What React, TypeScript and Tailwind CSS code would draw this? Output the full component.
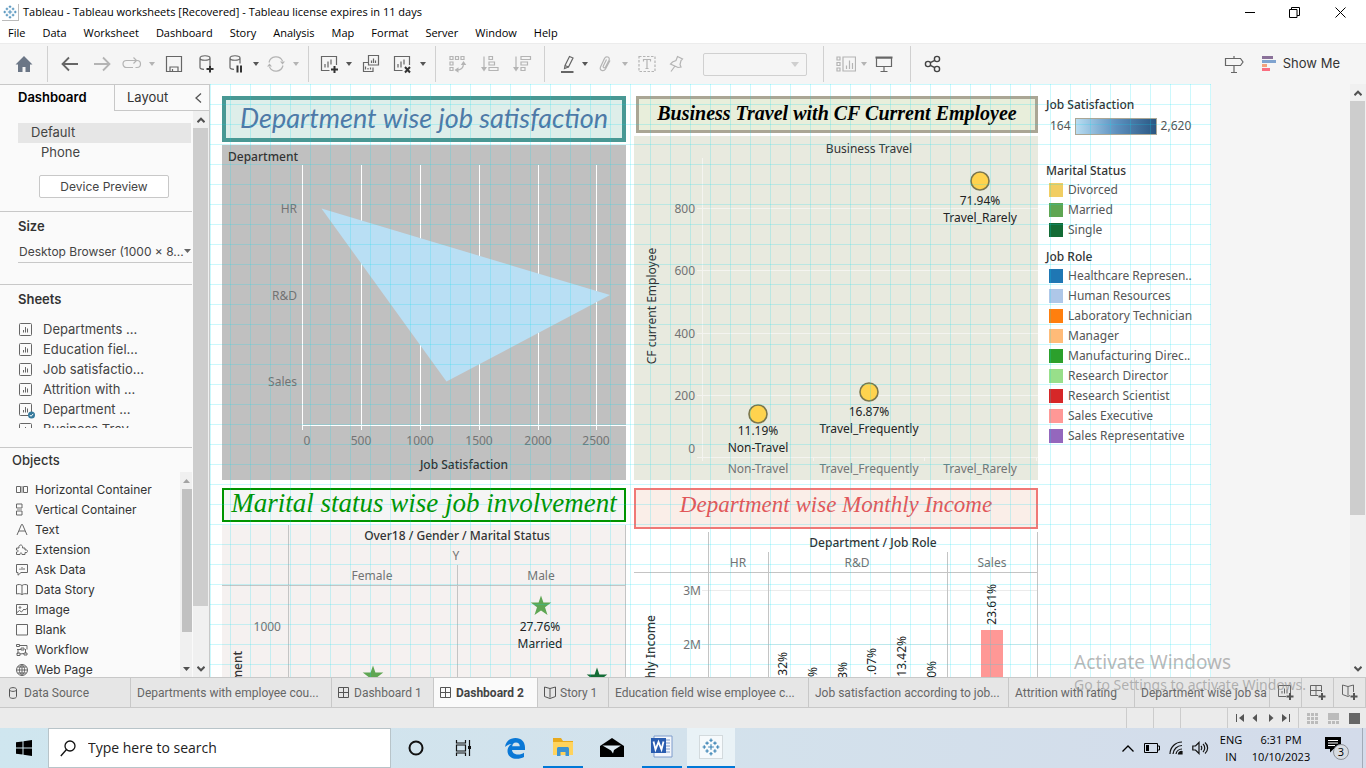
import React from "react";

const UI = "font-['Noto_Sans',sans-serif]";

function Caret({ dim }: { dim?: boolean }) {
  return (
    <span className="flex w-3 shrink-0 justify-center">
      <svg width="6" height="4" viewBox="0 0 6 4" aria-hidden="true">
        <path d="M0 0h6L3 4z" fill={dim ? "#b4b4b4" : "#555"} />
      </svg>
    </span>
  );
}

function Tool({ label, w, dim, children }: { label: string; w: string; dim?: boolean; children: React.ReactNode }) {
  return (
    <button aria-label={label} className={`flex h-8 shrink-0 items-center justify-center ${w}`}>
      <svg width="20" height="20" viewBox="0 0 20 20" fill="none" stroke={dim ? "#b4b4b4" : "#666"} strokeWidth="1.2" aria-hidden="true">
        {children}
      </svg>
    </button>
  );
}

function Sep({ m }: { m: string }) {
  return <span className={`h-9 w-px shrink-0 bg-[#d0d0d0] ${m}`} />;
}

function TableauMark({ size }: { size: number }) {
  return (
    <svg width={size} height={size} viewBox="0 0 16 16" stroke="#3a83b4" strokeWidth="1" aria-hidden="true">
      <path d="M8 5.5v5M5.5 8h5M8 .5v3M6.5 2h3M8 12.5v3M6.5 14h3M2 6.5v3M.5 8h3M14 6.5v3M12.5 8h3M4.5 3v3M3 4.5h3M11.5 3v3M10 4.5h3M4.5 10v3M3 11.5h3M11.5 10v3M10 11.5h3" />
    </svg>
  );
}

function TitleBar() {
  return (
    <header className={`flex h-6 shrink-0 items-center pl-[2px] text-[11px] text-black ${UI}`}>
      <span className="border-r border-b border-[#bbb] p-px"><TableauMark size={14} /></span>
      <h1 className="ml-1 font-['Open_Sans',sans-serif] whitespace-nowrap">Tableau - Tableau worksheets [Recovered] - Tableau license expires in 11 days</h1>
      <div className="ml-auto flex pr-[3px]">
        <button aria-label="Minimize" className="flex h-5 w-[45px] items-center justify-center">
          <svg width="10" height="10" stroke="#000"><path d="M0 5.500h10" /></svg>
        </button>
        <button aria-label="Restore" className="flex h-5 w-[45px] items-center justify-center">
          <svg width="11" height="11" fill="none" stroke="#000"><path d="M.5 2.500h7.500v8h-7.500zM2.500 2.500v-2h8v8h-2.500" /></svg>
        </button>
        <button aria-label="Close" className="flex h-5 w-[46px] items-center justify-center">
          <svg width="11" height="11" stroke="#000"><path d="M.5 .5l10 10M10.500 .5l-10 10" /></svg>
        </button>
      </div>
    </header>
  );
}

const menus = ["File", "Data", "Worksheet", "Dashboard", "Story", "Analysis", "Map", "Format", "Server", "Window", "Help"];

function MenuBar() {
  return (
    <nav className="flex h-[19px] shrink-0 items-center gap-[17px] pl-2 font-['Open_Sans',sans-serif] text-[11px] text-black">
      {menus.map((m) => <button key={m}>{m}</button>)}
    </nav>
  );
}

function Toolbar() {
  return (
    <div className="flex h-[41px] shrink-0 items-center border-t border-[#ececec] bg-[#f5f5f5] pl-2">
      <Tool label="Home" w="w-8"><path d="M1.500 10.500L10 2l8.500 8.500h-2.500v7.500h-4.500v-5h-3v5H4v-7.500z" fill="#6b7686" stroke="none" /></Tool>
      <Sep m="ml-[7px] mr-1.5" />
      <Tool label="Undo" w="w-8"><path d="M18 10H3M9 3.500L2.500 10 9 16.500" strokeWidth="1.800" /></Tool>
      <Tool label="Redo" w="w-8" dim><path d="M2 10h15M11 3.500l6.500 6.500-6.500 6.500" strokeWidth="1.800" /></Tool>
      <Tool label="Replay" w="w-7" dim><path d="M11 13.500H4.500a3.500 3.500 0 0 1 0-7H14M11.500 3.500l3 3-3 3M15 6.500a3.500 3.500 0 0 1 0 7h-1.500" /></Tool>
      <Caret dim />
      <Tool label="Save" w="w-8"><path d="M2.500 2.500h15v15h-15zM6 17.500v-4.500h8v4.500M8.500 15v2.500" /></Tool>
      <Tool label="New data source" w="w-8"><path d="M4 4v9.500c0 1 2 1.700 4 1.900M14 4v7M4 4c0-3 10-3 10 0s-10 3-10 0" /><path d="M14 11.500v7M10.500 15h7" stroke="#333" strokeWidth="2" /></Tool>
      <Tool label="Pause updates" w="w-7"><path d="M4 4v9.500c0 1 2 1.700 4 1.900M14 4v5.500M4 4c0-3 10-3 10 0s-10 3-10 0" /><path d="M11.500 11.500v7M15 11.500v7" stroke="#333" strokeWidth="2" /></Tool>
      <Caret />
      <Tool label="Refresh" w="w-7" dim><path d="M3 8.500a7.200 7.200 0 0 1 13.500-1.500M17 11.500a7.200 7.200 0 0 1-13.500 1.500" /><path d="M14 7.500h5l-2.500 3zM1 12.500h5L3.500 9.500z" fill="#b4b4b4" stroke="none" /></Tool>
      <Caret dim />
      <Sep m="mx-1.5" />
      <Tool label="New worksheet" w="w-7"><path d="M10.500 16.500h-8v-14h15v8.500M6 13.500V10M9 13.500V7.500M12 10.500v-5" /><path d="M15.500 12v7M12 15.500h7" stroke="#333" strokeWidth="2" /></Tool>
      <Caret />
      <Tool label="Duplicate" w="w-8"><path d="M7.500 1.500h10v9.500h-10zM10.500 9V6.500M12.500 9V4.500M14.500 9V6.500M7 8.500H2.500v9h9.500V13.500M4.500 15.500v-3M7 15.500v-1.500M9.500 15.500v-2" /></Tool>
      <Tool label="Clear sheet" w="w-[30px]"><path d="M10.500 16.500h-8v-14h15v8.500M6 13.500V10M9 13.500V7.500M12 10.500v-5" /><path d="M13 13l5 5.500M18 13l-5 5.500" stroke="#333" strokeWidth="2" /></Tool>
      <Caret />
      <Sep m="mx-1.5" />
      <Tool label="Swap rows and columns" w="w-8" dim><path d="M2 2.500h3v3H2zM7.500 2.500h3v3h-3zM13 2.500h3v3h-3zM2 8h3v3H2zM2 13.500h3v3H2z M8.500 16c4.500 0 7-2.500 7-6.500" /><path d="M12.800 11h5.500L15.500 7zM10.500 13.200v5.500L6.500 16z" fill="#b4b4b4" stroke="none" /></Tool>
      <Tool label="Sort ascending" w="w-8" dim><path d="M4 2.500v12M9 2.500h3.500v3H9zM9 8h5.500v3H9zM9 13.500h9v3H9z" /><path d="M1 13h6l-3 4.500z" fill="#b4b4b4" stroke="none" /></Tool>
      <Tool label="Sort descending" w="w-8" dim><path d="M4 2.500v12M9 2.500h9.500v3H9zM9 8h6.500v3H9zM9 13.500h4v3H9z" /><path d="M1 13h6l-3 4.500z" fill="#b4b4b4" stroke="none" /></Tool>
      <Sep m="ml-1.5 mr-3.5" />
      <Tool label="Highlight" w="w-5"><path d="M6 11.500L10.500 2.500 14 4 9.500 13zL5.500 14.500 9.500 13" /><path d="M2 18h12.500" strokeWidth="2" /></Tool>
      <Caret />
      <Tool label="Group members" w="w-7" dim><path d="M15 6.500L10.500 15c-1.800 3-6.500 1.500-5-2l4-8.500c1.500-3 6-1.500 4.500 1.800L10.500 13c-.8 1.500-3 .8-2.200-1L11.500 5.500M5.500 13L9 5.500" /></Tool>
      <Caret dim />
      <Tool label="Show mark labels" w="w-8" dim><path d="M2 2.500h16v15H2z" strokeDasharray="2.500 1.500" /><path d="M6.500 7.500v-2h7v2M10 5.500v9M8.500 14.500h3" /></Tool>
      <Tool label="Fix axes" w="w-7" dim><path d="M10.500 2.500l5 2.500-1.500 1.500-1 4 1 2.500-3 .5-7.500-3.500 2-2 3.500-1.500zM8 12l-4 5.500" /></Tool>
      <select aria-label="Fit" disabled className="ml-3 h-[23px] w-26 appearance-none rounded-xs border border-[#d0d0d0] bg-[#f5f5f5]" />
      <span className="-ml-4 flex w-4"><svg width="8" height="5" viewBox="0 0 8 5"><path d="M0 0h8L4 5z" fill="#cfcfcf" /></svg></span>
      <Sep m="ml-4 mr-2.5" />
      <Tool label="Show cards" w="w-6" dim><path d="M1 3h3v3H1zM1 8.500h3v3H1zM1 14h3v3H1zM7 3h12.500v14H7zM10.500 15v-3.500M13.500 15V6.500M16.500 15V9" /></Tool>
      <Caret dim />
      <Tool label="Presentation mode" w="w-7"><path d="M2.500 4h15v8.500h-15zM10 12.500V17M6.500 17.500h7" /><path d="M1.500 3.500h17" strokeWidth="2" /></Tool>
      <Sep m="ml-3 mr-1.5" />
      <Tool label="Share" w="w-8"><g stroke="#444" strokeWidth="1.400"><circle cx="5" cy="10" r="2.600" /><circle cx="14" cy="5" r="2.600" /><circle cx="14" cy="15" r="2.600" /><path d="M7.300 8.700l4.500-2.400M7.300 11.300l4.500 2.400" /></g></Tool>
      <div className="ml-auto flex items-center gap-3 pr-[26px]">
        <Tool label="Guide" w="w-8"><path d="M1.500 4.500h15l2.500 3.500-2.500 3.500h-15zM10 2v2.500M10 11.500v7M7 18.500h6" /></Tool>
        <button className="flex items-center gap-1.5 font-['Inter',sans-serif] text-[13px] text-[#333]">
          <svg width="15" height="16" aria-hidden="true">
            <path d="M0 0h11v3H0z" fill="#8a7199" /><path d="M0 4h14v3H0z" fill="#7fa3cf" /><path d="M0 8h5v3H0z" fill="#f2a27c" /><path d="M0 12h8v3H0z" fill="#fa6e80" />
          </svg>
          Show Me
        </button>
      </div>
    </div>
  );
}

function Chevron({ dir }: { dir: "up" | "down" }) {
  return (
    <button aria-label={`Scroll ${dir}`} className="flex h-[17px] w-full shrink-0 items-center justify-center">
      <svg width="8" height="6" fill="none" stroke="#505050" strokeWidth="2"><path d={dir === "up" ? "M.5 5.200L4 1.700l3.500 3.500" : "M.5 .8L4 4.300 7.500.8"} /></svg>
    </button>
  );
}

function SheetIcon({ used }: { used?: boolean }) {
  return (
    <svg width="17" height="17" viewBox="0 0 17 17" fill="none" stroke="#666" className="shrink-0" aria-hidden="true">
      <rect x=".5" y="1.500" width="12" height="12" rx="1" />
      <path d="M4.500 10.500V8M6.500 10.500V5M8.500 10.500V6.500" />
      {used && <><circle cx="12.500" cy="13" r="3.500" fill="#35799c" stroke="none" /><path d="M10.800 13l1.200 1.300 2.200-2.400" stroke="#fff" /></>}
    </svg>
  );
}

const objectIcons: [string, React.ReactNode][] = [
  ["Horizontal Container", <><path d="M.5 3.500h4v6h-4zM7.500 3.500h4v6h-4z" /><path d="M5 3h2v7H5z" fill="#bbb" stroke="none" /></>],
  ["Vertical Container", <><path d="M.5 1h5.500v4H.5zM.5 8h5.500v4H.5z" /><path d="M1 5.500h5v2H1z" fill="#bbb" stroke="none" /></>],
  ["Text", <path d="M1 12L5.500 1.500h1L11 12M3 8h6" />],
  ["Extension", <path d="M.5 5H3c-1-4 4.500-4 3.500 0h2.500v2c3.500-1 3.500 3.500 0 2.500v2H6c.5-2-2.500-2-2 0H.5V9c2 .5 2-2.500 0-2z" />],
  ["Ask Data", <><path d="M.5 1.500h11v8H5L2 12.200V9.500H.5z" /><path d="M4 7V5.500M6 7V4M8 7V5" /></>],
  ["Data Story", <path d="M6 2.500v9M6 2.500C4 1 2.500 1.500.5 2v9c2-.5 3.500-.5 5.500.5 2-1 3.500-1 5.500-.5V2c-2-.5-3.500-1-5.500.5" />],
  ["Image", <><path d="M.5 1.500h11v10H.5zM1 9.500l2.500-2 2 1.500L8 6l1 1 2.500-2" /><circle cx="4" cy="4.500" r=".8" /></>],
  ["Blank", <path d="M.5 1.500h11v10.500H.5z" />],
  ["Workflow", <path d="M.5 1.500h3v2h-3zM3.500 2.500H11v4M5 5h3v2H5zM1 6.500h4M2 6.500v4H1M1 10h3v2.500H1zM8 10h3v2H8zM4 11l4-.5M9.500 10V6" />],
  ["Web Page", <><circle cx="6" cy="7" r="5.500" /><path d="M.5 7h11M6 1.500v11M1.500 4h9M1.500 10h9M6 1.500c-3.500 3-3.500 8 0 11 3.500-3 3.500-8 0-11" /></>],
];

function Sidebar() {
  const sheets = ["Departments ...", "Education fiel...", "Job satisfactio...", "Attrition with ...", "Department ...", "Business Trav..."];
  return (
    <aside className="flex w-[210px] shrink-0 flex-col border-t border-r border-[#c8c8c8] bg-[#fafafa] font-['Inter',sans-serif] text-xs text-[#444]">
      <div className="flex h-[26px] shrink-0">
        <button className="w-[114px] pl-[18px] text-left text-[13px] font-semibold text-black">Dashboard</button>
        <div className="flex flex-1 items-center justify-between border-b border-l border-[#c8c8c8] pr-[7px] pl-3">
          <button className="text-[13px] text-[#333]">Layout</button>
          <button aria-label="Collapse pane"><svg width="7" height="10" fill="none" stroke="#555" strokeWidth="1.300"><path d="M6 .5L1 5l5 4.500" /></svg></button>
        </div>
      </div>
      <div className="flex min-h-0 flex-1">
        <div className="flex min-w-0 flex-1 flex-col overflow-hidden">
          <div className="shrink-0 border-b border-[#c8c8c8] pt-3 pr-px pb-[13px] pl-[18px]">
            <button className="block h-5 w-full bg-[#e6e6e6] pl-[13px] text-left text-[13px]">Default</button>
            <button className="block h-5 pl-[23px] text-[13px]">Phone</button>
            <button className="mt-3 ml-[21px] block h-[23px] w-[130px] rounded-xs border border-[#c8c8c8] bg-white">Device Preview</button>
          </div>
          <section className="h-[73px] shrink-0 border-b border-[#c8c8c8] pt-[3px] pl-[18px]">
            <h2 className="text-[13px] leading-[22px] font-semibold text-[#333]">Size</h2>
            <button className="mt-1 flex h-[22px] w-full items-center justify-between border-b border-[#c8c8c8] pr-px pl-px whitespace-nowrap">
              Desktop Browser (1000 x 8...
              <svg width="7" height="5" className="shrink-0"><path d="M0 0h7L3.500 4z" fill="#666" /></svg>
            </button>
          </section>
          <section className="h-[163px] shrink-0 border-b border-[#c8c8c8] pt-[3px] pl-[18px]">
            <h2 className="text-[13px] leading-[22px] font-semibold text-[#333]">Sheets</h2>
            <ul className="mt-2.5 h-[108px] overflow-hidden">
              {sheets.map((s, i) => (
                <li key={s} className="flex h-5 items-center gap-[7px] pl-px text-[13px]"><SheetIcon used={i === 4} />{s}</li>
              ))}
            </ul>
          </section>
          <section className="flex min-h-0 flex-1 flex-col">
            <h2 className="pl-3 text-[13px] leading-[24px] font-medium text-[#333]">Objects</h2>
            <div className="flex min-h-0 flex-1">
              <ul className="min-w-0 flex-1 overflow-hidden pt-2">
                {objectIcons.map(([name, icon]) => (
                  <li key={name} className="flex h-5 items-center gap-[7px] pl-4 whitespace-nowrap text-[#333]">
                    <svg width="12" height="14" viewBox="0 0 12 14" fill="none" stroke="#666" aria-hidden="true">{icon}</svg>
                    {name}
                  </li>
                ))}
              </ul>
              <div className="flex w-3 shrink-0 flex-col items-center bg-[#f0f0f0]">
                <svg width="8" height="17"><path d="M1 11h7L4.500 7z" fill="#a3a3a3" /></svg>
                <span className="h-[143px] w-2.5 self-end bg-[#c1c1c1]" />
                <svg width="8" height="17" className="mt-auto"><path d="M1 7h7L4.500 11z" fill="#505050" /></svg>
              </div>
            </div>
          </section>
        </div>
        <div className="ml-px flex w-4 shrink-0 flex-col bg-[#f0f0f0] pr-px">
          <Chevron dir="up" />
          <span className="h-[478px] shrink bg-[#cdcdcd]" />
          <div className="mt-auto"><Chevron dir="down" /></div>
        </div>
      </div>
    </aside>
  );
}

const dark = "#333";
const light = "#737373";

function SatisfactionChart() {
  return (
    <svg width="404" height="335" viewBox="222 145 404 335" className={`mt-[3px] shrink-0 bg-[#c0c0c0] text-xs ${UI}`}>
      <path d="M302.500 165v265M361.500 165v265M420.500 165v265M479.500 165v265M538.500 165v265M596.500 165v265M302 425.500h324" stroke="#fff" />
      <path d="M321.500 208.500L610 295 446.500 381.500z" fill="#b9dff4" />
      <g fill={dark} className="font-medium">
        <text x="228" y="161">Department</text>
        <text x="464" y="469" textAnchor="middle">Job Satisfaction</text>
      </g>
      <g fill={light} textAnchor="end">
        <text x="297" y="213">HR</text><text x="297" y="300">R&amp;D</text><text x="297" y="386">Sales</text>
      </g>
      <g fill={light} textAnchor="middle">
        <text x="307" y="445">0</text><text x="361" y="445">500</text><text x="420" y="445">1000</text>
        <text x="479" y="445">1500</text><text x="538" y="445">2000</text><text x="596" y="445">2500</text>
      </g>
    </svg>
  );
}

function TravelChart() {
  const marks = [
    { x: 980, y: 181, pct: "71.94%", name: "Travel_Rarely", ty: 205 },
    { x: 869, y: 392, pct: "16.87%", name: "Travel_Frequently", ty: 416 },
    { x: 758, y: 414, pct: "11.19%", name: "Non-Travel", ty: 435 },
  ];
  return (
    <svg width="404" height="344" viewBox="634 136 404 344" className={`mt-[3px] shrink-0 bg-[#e8eadf] text-xs ${UI}`}>
      <path d="M702.500 158v303M697 208.500h341M697 270.500h341M697 333.500h341M697 395.500h341M697 457.500h341M813.500 457v4M924.500 457v4M1036.500 457v4" stroke="#f4f4f0" />
      <text x="869" y="153" textAnchor="middle" fill={dark}>Business Travel</text>
      <text transform="translate(656 306) rotate(-90)" textAnchor="middle" fill={dark}>CF current Employee</text>
      <g fill={light} textAnchor="end">
        <text x="695" y="213">800</text><text x="695" y="275">600</text><text x="695" y="338">400</text><text x="695" y="400">200</text><text x="695" y="453">0</text>
      </g>
      {marks.map((m) => (
        <g key={m.name} textAnchor="middle">
          <circle cx={m.x} cy={m.y} r="9" fill="#ffd34e" stroke="#7b764c" strokeWidth="1.600" />
          <text x={m.x} y={m.ty} fill="#222">{m.pct}</text>
          <text x={m.x} y={m.ty + 17} fill="#222">{m.name}</text>
          <text x={m.x} y="473" fill={light}>{m.name}</text>
        </g>
      ))}
    </svg>
  );
}

function Star({ x, y, fill }: { x: number; y: number; fill: string }) {
  return <path transform={`translate(${x} ${y})`} fill={fill} d="M0-10.500L2.400-3.400 10.300-3.400 4 1.300 6.500 9 0 4.400-6.500 9-4 1.300-10.300-3.400-2.400-3.400z" />;
}

function InvolvementChart() {
  return (
    <svg width="404" height="355" viewBox="222 525 404 355" className={`mt-[3px] shrink-0 bg-[#f5f1f0] text-xs ${UI}`}>
      <path d="M288.500 525v355M457.500 565v315M625.500 525v355M222 585.500h404" stroke="#c4c4c4" />
      <g textAnchor="middle" fill={light}>
        <text x="457" y="540" fill={dark} className="font-medium">Over18 / Gender / Marital Status</text>
        <text x="456" y="560">Y</text><text x="372" y="580">Female</text><text x="541" y="580">Male</text>
        <text x="540" y="631" fill="#222">27.76%</text><text x="540" y="648" fill="#222">Married</text>
      </g>
      <text x="281" y="631" textAnchor="end" fill={light}>1000</text>
      <text transform="translate(242 651) rotate(-90)" textAnchor="end" fill={dark} className="font-medium">Job Involvement</text>
      <Star x={541} y={606} fill="#5fa653" />
      <Star x={373} y={676} fill="#5fa653" />
      <Star x={597} y={678} fill="#136b35" />
    </svg>
  );
}

function IncomeChart() {
  const labels: [number, number, string][] = [[787, 652, "32%"], [817, 667, "%"], [847, 662, "3%"], [876, 648, ".07%"], [906, 636, "13.42%"], [936, 661, "0%"], [996, 584, "23.61%"]];
  return (
    <svg width="404" height="348" viewBox="634 532 404 348" className={`mt-[3px] shrink-0 text-xs ${UI}`}>
      <path d="M702 590.500h335M702 644.500h335" stroke="#ebebeb" />
      <path d="M708.500 532v348M768.500 552v328M947.500 552v328M1037.500 532v348M634 572.500h404" stroke="#c4c4c4" />
      <path d="M981 630h22v250h-22z" fill="#ff9896" />
      <g textAnchor="middle" fill={light}>
        <text x="873" y="547" fill={dark} className="font-medium">Department / Job Role</text>
        <text x="738" y="567">HR</text><text x="857" y="567">R&amp;D</text><text x="992" y="567">Sales</text>
      </g>
      <g textAnchor="end" fill={light}>
        <text x="701" y="595">3M</text><text x="701" y="649">2M</text>
        <text transform="translate(655 615) rotate(-90)" fill={dark} className="font-medium">Monthly Income</text>
      </g>
      {labels.map(([x, y, t]) => (
        <text key={x} transform={`translate(${x} ${y}) rotate(-90)`} textAnchor="end" fill="#222">{t}</text>
      ))}
    </svg>
  );
}

function LegendRow({ swatch, name }: { swatch: string; name: string }) {
  return <li className="flex h-5 items-center gap-[5px] pl-[3px]"><span className={`size-3.5 ${swatch}`} />{name}</li>;
}

function Legends() {
  return (
    <div className={`w-[156px] shrink-0 text-xs whitespace-nowrap text-[#555] ${UI}`}>
      <h3 className="h-[18px] leading-[18px] font-medium text-[#333]">Job Satisfaction</h3>
      <div className="flex h-6 items-center gap-1 pl-1">
        164<span className="h-[17px] w-[82px] border border-[#aaa695] bg-linear-to-r from-[#b9ddf1] via-[#5e91bf] to-[#2a5783]" />2,620
      </div>
      <h3 className="mt-6 h-[18px] leading-[18px] font-medium text-[#333]">Marital Status</h3>
      <ul>
        <LegendRow swatch="bg-[#f1ce63]" name="Divorced" />
        <LegendRow swatch="bg-[#5fa653]" name="Married" />
        <LegendRow swatch="bg-[#136b35]" name="Single" />
      </ul>
      <h3 className="mt-2 h-[18px] leading-[18px] font-medium text-[#333]">Job Role</h3>
      <ul>
        <LegendRow swatch="bg-[#1f77b4]" name="Healthcare Represen.." />
        <LegendRow swatch="bg-[#aec7e8]" name="Human Resources" />
        <LegendRow swatch="bg-[#ff7f0e]" name="Laboratory Technician" />
        <LegendRow swatch="bg-[#ffbb78]" name="Manager" />
        <LegendRow swatch="bg-[#2ca02c]" name="Manufacturing Direc.." />
        <LegendRow swatch="bg-[#98df8a]" name="Research Director" />
        <LegendRow swatch="bg-[#d62728]" name="Research Scientist" />
        <LegendRow swatch="bg-[#ff9896]" name="Sales Executive" />
        <LegendRow swatch="bg-[#9467bd]" name="Sales Representative" />
      </ul>
    </div>
  );
}

function Canvas() {
  return (
    <main className="flex min-w-0 flex-1 bg-[#f5f5f5]">
      <div className="flex min-w-0 flex-1 overflow-hidden">
        <div className="relative flex w-[1001px] shrink-0 gap-2 overflow-hidden bg-white pt-3 pl-3">
          <div className="flex w-[404px] shrink-0 flex-col">
            <h2 className="flex h-[46px] shrink-0 items-center justify-center border-4 border-[#499894] bg-[#deeeea] pb-1 font-['Lato',sans-serif] text-[27px] leading-none whitespace-nowrap text-[#4e79a7] italic">Department wise job satisfaction</h2>
            <SatisfactionChart />
            <h2 className="mt-2 flex h-[34px] shrink-0 items-center justify-center border-2 border-[#009400] bg-[#f5f5f5] pb-1 font-['Liberation_Serif',serif] text-[27px] leading-none whitespace-nowrap text-[#009400] italic">Marital status wise job involvement</h2>
            <InvolvementChart />
          </div>
          <div className="flex w-[404px] shrink-0 flex-col">
            <h2 className="ml-0.5 flex h-[37px] shrink-0 items-center justify-center border-3 border-[#aaa695] bg-[#e8eedb] pb-1 font-['Liberation_Serif',serif] text-[20px] leading-none font-bold whitespace-nowrap text-black italic">Business Travel with CF Current Employee</h2>
            <TravelChart />
            <h2 className="mt-2 flex h-[41px] shrink-0 items-center justify-center border-2 border-[#f07876] bg-[#faeee8] pb-2 font-['Liberation_Serif',serif] text-[23px] leading-none whitespace-nowrap text-[#e15759] italic">Department wise Monthly Income</h2>
            <IncomeChart />
          </div>
          <Legends />
          <div className="pointer-events-none absolute inset-0 bg-[linear-gradient(to_right,rgba(0,220,240,0.2)_1px,transparent_1px),linear-gradient(to_bottom,rgba(0,220,240,0.2)_1px,transparent_1px)] bg-size-[20px_20px]" />
        </div>
      </div>
      <div className="flex w-4 shrink-0 flex-col bg-[#f0f0f0] pr-px">
        <Chevron dir="up" />
        <span className="h-[414px] bg-[#cdcdcd]" />
        <div className="mt-auto"><Chevron dir="down" /></div>
      </div>
    </main>
  );
}

function GridIcon() {
  return <svg width="12" height="12" fill="none" stroke="#555" className="shrink-0"><path d="M.5 .5h10v10H.5zM5.500 .5v10M.5 5.500h10" /></svg>;
}
function BookIcon() {
  return <svg width="12" height="13" viewBox="0 0 12 13" fill="none" stroke="#555" className="shrink-0"><path d="M6 2.500v9M6 2.500L.5 1v9.500l5.500 2 5.500-2V1z" /></svg>;
}

const tabs: { w: string; name: string; icon?: React.ReactNode; on?: boolean }[] = [
  { w: "w-[131px] pl-2", name: "Data Source", icon: <svg width="10" height="12" fill="none" stroke="#555" className="mr-0.5 shrink-0"><path d="M1.500 2.500v7c0 2.500 7 2.500 7 0v-7c0-2.500-7-2.500-7 0s7 2.500 7 0" /></svg> },
  { w: "w-[201px] pl-1.5", name: "Departments with employee cou..." },
  { w: "w-[102px] pl-1.5", name: "Dashboard 1", icon: <GridIcon /> },
  { w: "w-[104px] pl-1.5", name: "Dashboard 2", icon: <GridIcon />, on: true },
  { w: "w-[71px] pl-1.5", name: "Story 1", icon: <BookIcon /> },
  { w: "w-[200px] pl-1.5", name: "Education field wise employee c..." },
  { w: "w-[200px] pl-1.5", name: "Job satisfaction according to job..." },
  { w: "w-[126px] pl-1.5", name: "Attrition with rating" },
];

function SheetTabs() {
  return (
    <div className="flex h-[31px] shrink-0 border-t border-b border-[#c8c8c8] bg-[#e6e6e6] font-['Roboto',sans-serif] text-xs text-[#666]">
      {tabs.map((t) => (
        <button key={t.name} className={`flex shrink-0 items-center gap-1 overflow-hidden border-r border-[#c8c8c8] whitespace-nowrap ${t.w} ${t.on ? "bg-[#fafafa] font-bold text-[#444]" : ""}`}>{t.icon}{t.name}</button>
      ))}
      <button className="flex min-w-0 flex-1 items-center overflow-hidden border-r border-[#c8c8c8] pl-1.5 whitespace-nowrap">Department wise job sa</button>
      {[
        ["New worksheet", "M9 12.500H1.500v-11h12V9M5 9.500V7M7.500 9.500V4.500M10 9.500V5.500"],
        ["New dashboard", "M9 11.500H1.500v-10h11V8M7 1.500v10M1.500 6.500h11"],
        ["New story", "M7 2.500v9M9 11.500l-2 1-5.500-2V1L7 2.500 12.500 1V8"],
      ].map(([label, d]) => (
        <button key={label} aria-label={label} className="flex w-8 shrink-0 items-center justify-center border-r border-[#c8c8c8]">
          <svg width="17" height="17" fill="none" stroke="#666"><path d={d} /><path d="M13 9v7M9.500 12.500h7" strokeWidth="2" stroke="#555" /></svg>
        </button>
      ))}
    </div>
  );
}

function StatusBar() {
  return (
    <div className="flex h-5 shrink-0 bg-[#ebebeb]">
      <span className="ml-auto w-[27px] border-l border-[#ccc]" />
      <span className="w-[27px] border-l border-[#ccc]" />
      <span className="w-[47px] border-l border-[#ccc]" />
      <div className="flex w-[71px] items-center justify-around border-l border-[#ccc] px-1">
        {[["First", "M1 0v8H0V0zM8 0v8L3 4z"], ["Previous", "M6 0v8L1.500 4z"], ["Next", "M2 0v8L6.500 4z"], ["Last", "M7 0v8h1V0zM0 0v8L5 4z"]].map(([l, d]) => (
          <button key={l} aria-label={l}><svg width="8" height="8" fill="#555"><path d={d} /></svg></button>
        ))}
      </div>
      <div className="flex w-[68px] items-center gap-2.5 border-l border-[#ccc] pl-2">
        <button aria-label="Show sheet sorter"><svg width="11" height="11" fill="#bbb"><path d="M0 0h3v3H0zM4 0h3v3H4zM8 0h3v3H8zM0 4h3v3H0zM4 4h3v3H4zM8 4h3v3H8zM0 8h3v3H0zM4 8h3v3H4zM8 8h3v3H8z" /></svg></button>
        <button aria-label="Show filmstrip"><svg width="11" height="11" fill="#bbb"><path d="M0 0h11v7H0zM0 8h3v3H0zM4 8h3v3H4zM8 8h3v3H8z" /></svg></button>
        <button aria-label="Show tabs"><svg width="11" height="11"><path d="M0 0h11v11H0z" fill="#666" /></svg></button>
      </div>
    </div>
  );
}

function TaskButton({ label, cls, children }: { label: string; cls: string; children: React.ReactNode }) {
  return <button aria-label={label} className={`flex h-10 shrink-0 items-center justify-center ${cls}`}>{children}</button>;
}

function Taskbar() {
  return (
    <footer className="flex h-10 shrink-0 items-center bg-linear-to-r from-[#cfe6ef] via-[#d3e2ec] to-[#d3dbea] font-['Open_Sans',sans-serif] text-black">
      <TaskButton label="Start" cls="w-12"><svg width="16" height="16"><path d="M0 2.300L6.500 1.400V7.500H0zM7.500 1.200L16 0v7.500H7.500zM0 8.500h6.500v6.100L0 13.700zM7.500 8.500H16V16L7.500 14.800z" /></svg></TaskButton>
      <label className="flex h-10 w-[343px] shrink-0 items-center gap-3 border border-[#b8c4c9] bg-white pl-[11px]">
        <svg width="16" height="17" fill="none" stroke="#111" strokeWidth="1.300"><circle cx="10" cy="6" r="5" /><path d="M6.500 9.500L.8 16" /></svg>
        <input aria-label="Search" placeholder="Type here to search" className="w-60 bg-transparent text-sm text-[#222] outline-none placeholder:text-[#222]" />
      </label>
      <TaskButton label="Cortana" cls="w-[50px]"><svg width="16" height="16" fill="none" stroke="#111" strokeWidth="2"><circle cx="8" cy="8" r="6.500" /></svg></TaskButton>
      <TaskButton label="Task View" cls="w-[46px]"><svg width="18" height="16" fill="none" stroke="#111" strokeWidth="1.200"><path d="M1.500 0v3h9V0M1.500 5h9v6h-9zM1.500 16v-3h9v3M14.500 0v16" /><path d="M13 6h3v3h-3z" fill="#111" stroke="none" /></svg></TaskButton>
      <TaskButton label="Edge" cls="w-[56px]">
        <svg width="22" height="22" viewBox="0 0 22 22"><path d="M1 10C2 3.500 6.500 1 11.500 1 17.500 1 21 5 21 10.500V13H8c.3 3 3 4.500 6 4.500 2.500 0 4.500-.8 6-1.800V20c-2 1.200-4.500 1.800-7.500 1.800C6.500 21.800 3.500 18 3.500 14c0-3 1.500-5.500 4.200-7C4.500 7 2.500 8.500 1 10zM8.200 9.300h7.600C15.800 6.800 14.300 5.500 12 5.500S8.500 7 8.200 9.300z" fill="#0a78d6" /></svg>
      </TaskButton>
      <TaskButton label="File Explorer" cls="w-10 border-b-2 border-[#0078d7]">
        <svg width="22" height="20"><path d="M1 1h8l2 3h10v13H1z" fill="#e8a91c" /><path d="M1 5h20v13H1z" fill="#ffd35c" /><path d="M5 19v-7c0-1.500.5-2 2-2h8c1.500 0 2 .5 2 2v7h-3.500v-4h-5v4z" fill="#3c93d2" /></svg>
      </TaskButton>
      <TaskButton label="Mail" cls="ml-1.5 w-[46px]"><svg width="24" height="20"><path d="M0 8L12 0l12 8v11H0z" /><path d="M2.500 7.500h18.500L14 12l-1 3.500-2-3z" fill="#dceaf2" /></svg></TaskButton>
      <TaskButton label="Word" cls="ml-[7px] w-10 border-b-2 border-[#0078d7]">
        <svg width="24" height="24"><path d="M4 1h18v21H4z" fill="#f3f6fb" stroke="#7f9ccc" /><path d="M14 5h6M14 8h6M14 11h6M14 14h6M14 17h6" stroke="#7f9ccc" /><path d="M1 3h15v15H1z" fill="#2a5db0" /><path d="M3.500 6.500l2 8 3-7.500 3 7.500 2-8" stroke="#fff" strokeWidth="1.800" fill="none" /></svg>
      </TaskButton>
      <TaskButton label="Tableau" cls="ml-[5px] w-12 border-b-2 border-[#0078d7] bg-[#e9f2f6]"><span className="border border-[#d3dadd] bg-[#f6fafc] p-0.5"><TableauMark size={18} /></span></TaskButton>
      <div className="ml-auto flex h-full items-center">
        <TaskButton label="Show hidden icons" cls="w-6"><svg width="12" height="7" fill="none" stroke="#000" strokeWidth="1.300"><path d="M.5 6.500L6 1l5.500 5.500" /></svg></TaskButton>
        <TaskButton label="Battery" cls="w-6"><svg width="16" height="10"><path d="M.5 .5h13v9H.5zM14 3h1.500v4H14" fill="none" stroke="#000" /><path d="M2 2h3v6H2z" /></svg></TaskButton>
        <TaskButton label="Network" cls="w-6"><svg width="14" height="14" fill="none" stroke="#111" strokeWidth="1.200"><path d="M1 13A12 12 0 0 1 13 1M4 13A9 9 0 0 1 13 4.500M7 13a6 6 0 0 1 6-5" /><path d="M9.500 13a3 3 0 0 1 3.500-2.500V13z" fill="#111" /></svg></TaskButton>
        <TaskButton label="Volume" cls="w-6"><svg width="17" height="14" fill="none" stroke="#111" strokeWidth="1.200"><path d="M.8 5v4h2.700l3.500 3.500v-11L3.500 5zM9 5c1 1 1 3 0 4M11 3c2.300 2 2.300 6 0 8M13 1.500c3.500 3 3.500 8 0 11" /></svg></TaskButton>
        <div className="w-[38px] text-center text-[11px] leading-[17px]"><p>ENG</p><p>IN</p></div>
        <div className="w-[62px] text-center text-[11px] leading-[17px]"><p>6:31 PM</p><p>10/10/2023</p></div>
        <button aria-label="Notifications" className="flex h-10 w-[50px] items-center justify-center">
          <svg width="26" height="26" viewBox="0 0 26 26"><path d="M1 2h16v12H9.500L6 17.500V14H1z" /><path d="M4 5.500h10M4 8h10M4 10.500h7" stroke="#fff" /><circle cx="17" cy="17" r="7.500" fill="#d8dce2" stroke="#8c9096" /><text x="17" y="21" fontSize="11" textAnchor="middle">3</text></svg>
        </button>
        <span className="h-full w-1 border-l border-[#a3abb8]" />
      </div>
    </footer>
  );
}

export default function App() {
  return (
    <div className="relative flex h-screen flex-col overflow-hidden bg-white">
      <TitleBar />
      <MenuBar />
      <Toolbar />
      <div className="flex min-h-0 flex-1">
        <Sidebar />
        <Canvas />
      </div>
      <SheetTabs />
      <StatusBar />
      <Taskbar />
      <div className={`pointer-events-none absolute right-[60px] bottom-[74px] whitespace-nowrap text-[#8a8a8a]/60 ${UI}`}>
        <p className="text-[19px] leading-7">Activate Windows</p>
        <p className="text-sm leading-[18px]">Go to Settings to activate Windows.</p>
      </div>
    </div>
  );
}
